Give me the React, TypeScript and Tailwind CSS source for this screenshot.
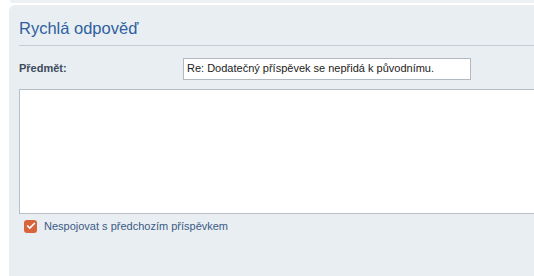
import { Check } from 'lucide-react';

export default function App() {
    return (
        <div className="min-h-screen w-[534px] h-[276px] overflow-hidden bg-white font-['Liberation_Sans',Arial,sans-serif]">
            {/* tail of the previous block */}
            <div className="ml-[10px] h-[3px] bg-[#eef1f4] rounded-bl-[4px]" />

            <div className="mt-[2px] ml-[9px] h-[271px] bg-[#e9eef2] rounded-tl-[6px] pl-[10px] flex flex-col">
                <h2 className="pt-[12px] h-[40px] text-[16.5px] leading-[22px] text-[#2f5f9f]">Rychlá odpověď</h2>
                <div className="h-px bg-[#c5cbd1]" />

                <div className="flex items-center h-[43px] pt-[2px]">
                    <label className="w-[164px] text-[11px] font-bold text-[#3d4b5c]">Předmět:</label>
                    <div className="w-[288px] h-[22px] bg-white border border-[#b3b9c0] flex items-center pl-[3px] text-[11px] text-[#222]">
                        Re: Dodatečný příspěvek se nepřidá k původnímu.
                    </div>
                </div>

                <div className="h-[125px] bg-white border border-[#b9bfc6] border-r-0" />

                <div className="flex items-center gap-[7px] pl-[5px] mt-[4px]">
                    <span className="w-[13px] h-[13px] rounded-[3px] bg-[#d8643c] flex items-center justify-center">
                        <Check className="w-[10px] h-[10px] text-white" strokeWidth={4} />
                    </span>
                    <span className="text-[11px] text-[#3b5b85]">Nespojovat s předchozím příspěvkem</span>
                </div>
            </div>
        </div>
    );
}
